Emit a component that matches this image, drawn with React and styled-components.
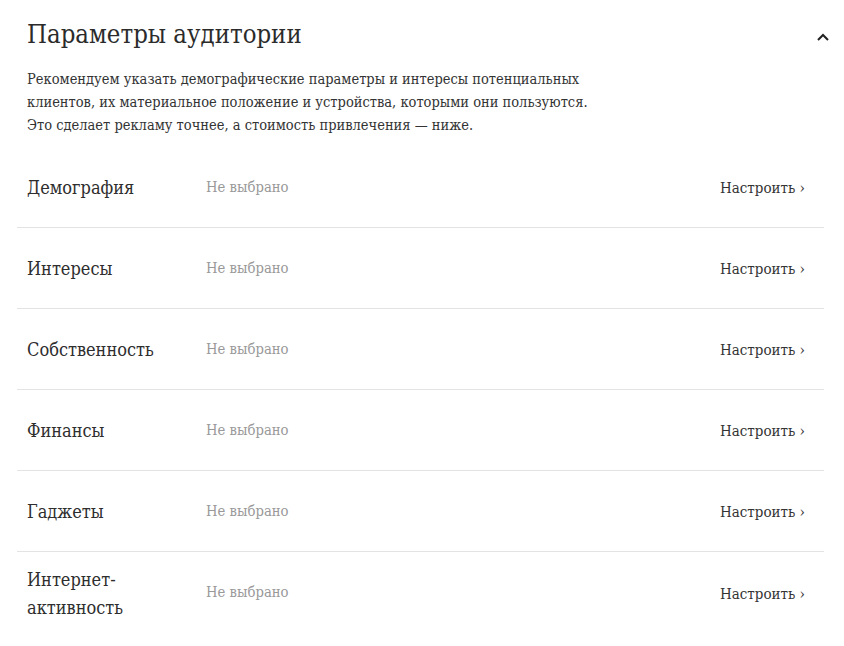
import styled, { createGlobalStyle } from "styled-components";

const GlobalStyle = createGlobalStyle`
  body {
    margin: 0;
    background: #fff;
    font-family: "DejaVu Serif", "Liberation Serif", serif;
    font-stretch: condensed;
    color: #333;
  }
`;

const Panel = styled.section`
  width: 807px;
  padding: 0 20px 0 17px;
`;

const Header = styled.div`
  display: flex;
  align-items: center;
  justify-content: space-between;
  padding: 14px 0 0 10px;
  height: 40px;
`;

const Title = styled.h2`
  margin: 0;
  font-size: 25.5px;
  font-weight: normal;
  color: #2b2b2b;
`;

const Toggle = styled.button`
  border: none;
  background: none;
  padding: 0;
  margin-right: -6px;
  margin-top: 5px;
  display: flex;
  cursor: pointer;
`;

const Intro = styled.p`
  margin: 14px 0 0;
  padding-left: 10px;
  font-size: 14.5px;
  line-height: 23px;
  color: #333;
`;

const List = styled.div`
  margin-top: 10px;
`;

const Row = styled.div`
  display: flex;
  align-items: center;
  box-sizing: border-box;
  height: 81px;
  padding: 2px 19px 0 10px;
  border-bottom: 1px solid #e3e3e3;
  &:last-child {
    border-bottom: none;
  }
`;

const Label = styled.div`
  width: 179px;
  flex-shrink: 0;
  padding-right: 12px;
  box-sizing: border-box;
  font-size: 18px;
  line-height: 28px;
  color: #2e2e2e;
`;

const Value = styled.div`
  flex: 1;
  font-size: 14.7px;
  color: #999;
  margin-top: -4px;
`;

const Action = styled.a`
  font-size: 15px;
  color: #333;
  cursor: pointer;
  text-decoration: none;
`;

const groups = [
  "Демография",
  "Интересы",
  "Собственность",
  "Финансы",
  "Гаджеты",
  "Интернет-активность",
];

export default function App() {
  return (
    <>
      <GlobalStyle />
      <Panel>
        <Header>
          <Title>Параметры аудитории</Title>
          <Toggle aria-label="Свернуть">
            <svg width="14" height="10" viewBox="0 0 14 10">
              <path d="M2 8 L7 3 L12 8" fill="none" stroke="#222" strokeWidth="2" />
            </svg>
          </Toggle>
        </Header>
        <Intro>
          Рекомендуем указать демографические параметры и интересы потенциальных
          <br />
          клиентов, их материальное положение и устройства, которыми они пользуются.
          <br />
          Это сделает рекламу точнее, а стоимость привлечения — ниже.
        </Intro>
        <List>
          {groups.map((g) => (
            <Row key={g}>
              <Label>{g}</Label>
              <Value>Не выбрано</Value>
              <Action>Настроить ›</Action>
            </Row>
          ))}
        </List>
      </Panel>
    </>
  );
}
